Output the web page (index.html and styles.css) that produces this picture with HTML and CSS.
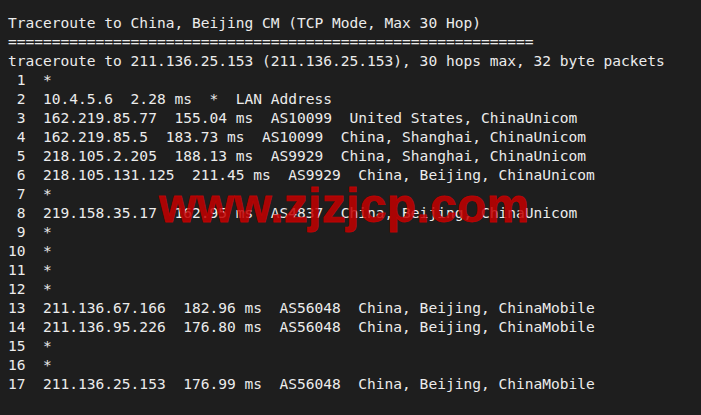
FILE: index.html
```html
<!DOCTYPE html>
<html>
<head>
<meta charset="utf-8">
<link rel="stylesheet" href="styles.css">
</head>
<body>
<div class="term">
<pre class="out">Traceroute to China, Beijing CM (TCP Mode, Max 30 Hop)
============================================================
traceroute to 211.136.25.153 (211.136.25.153), 30 hops max, 32 byte packets
 1  *
 2  10.4.5.6  2.28 ms  *  LAN Address
 3  162.219.85.77  155.04 ms  AS10099  United States, ChinaUnicom
 4  162.219.85.5  183.73 ms  AS10099  China, Shanghai, ChinaUnicom
 5  218.105.2.205  188.13 ms  AS9929  China, Shanghai, ChinaUnicom
 6  218.105.131.125  211.45 ms  AS9929  China, Beijing, ChinaUnicom
 7  *
 8  219.158.35.17  162.95 ms  AS4837  China, Beijing, ChinaUnicom
 9  *
10  *
11  *
12  *
13  211.136.67.166  182.96 ms  AS56048  China, Beijing, ChinaMobile
14  211.136.95.226  176.80 ms  AS56048  China, Beijing, ChinaMobile
15  *
16  *
17  211.136.25.153  176.99 ms  AS56048  China, Beijing, ChinaMobile</pre>
<div class="mark">www.zjzjcp.com</div>
</div>
</body>
</html>
```
FILE: styles.css
```css
html, body {
  margin: 0;
  padding: 0;
  background: #1e1e1e;
}
.term {
  position: relative;
  width: 701px;
  height: 415px;
  background: #1e1e1e;
  overflow: hidden;
}
.out {
  margin: 0;
  padding: 13px 0 0 8px;
  font-family: "DejaVu Sans Mono", "Liberation Mono", monospace;
  font-size: 14.55px;
  line-height: 19px;
  color: #ececec;
  white-space: pre;
}
.mark {
  position: absolute;
  left: 159px;
  top: 178px;
  font-family: "Liberation Sans", Arial, sans-serif;
  font-weight: bold;
  font-size: 48px;
  line-height: 56px;
  color: rgba(196, 0, 0, 0.86);
  letter-spacing: 0.3px;
  -webkit-text-stroke: 0.8px rgba(196, 0, 0, 0.86);
}
```
